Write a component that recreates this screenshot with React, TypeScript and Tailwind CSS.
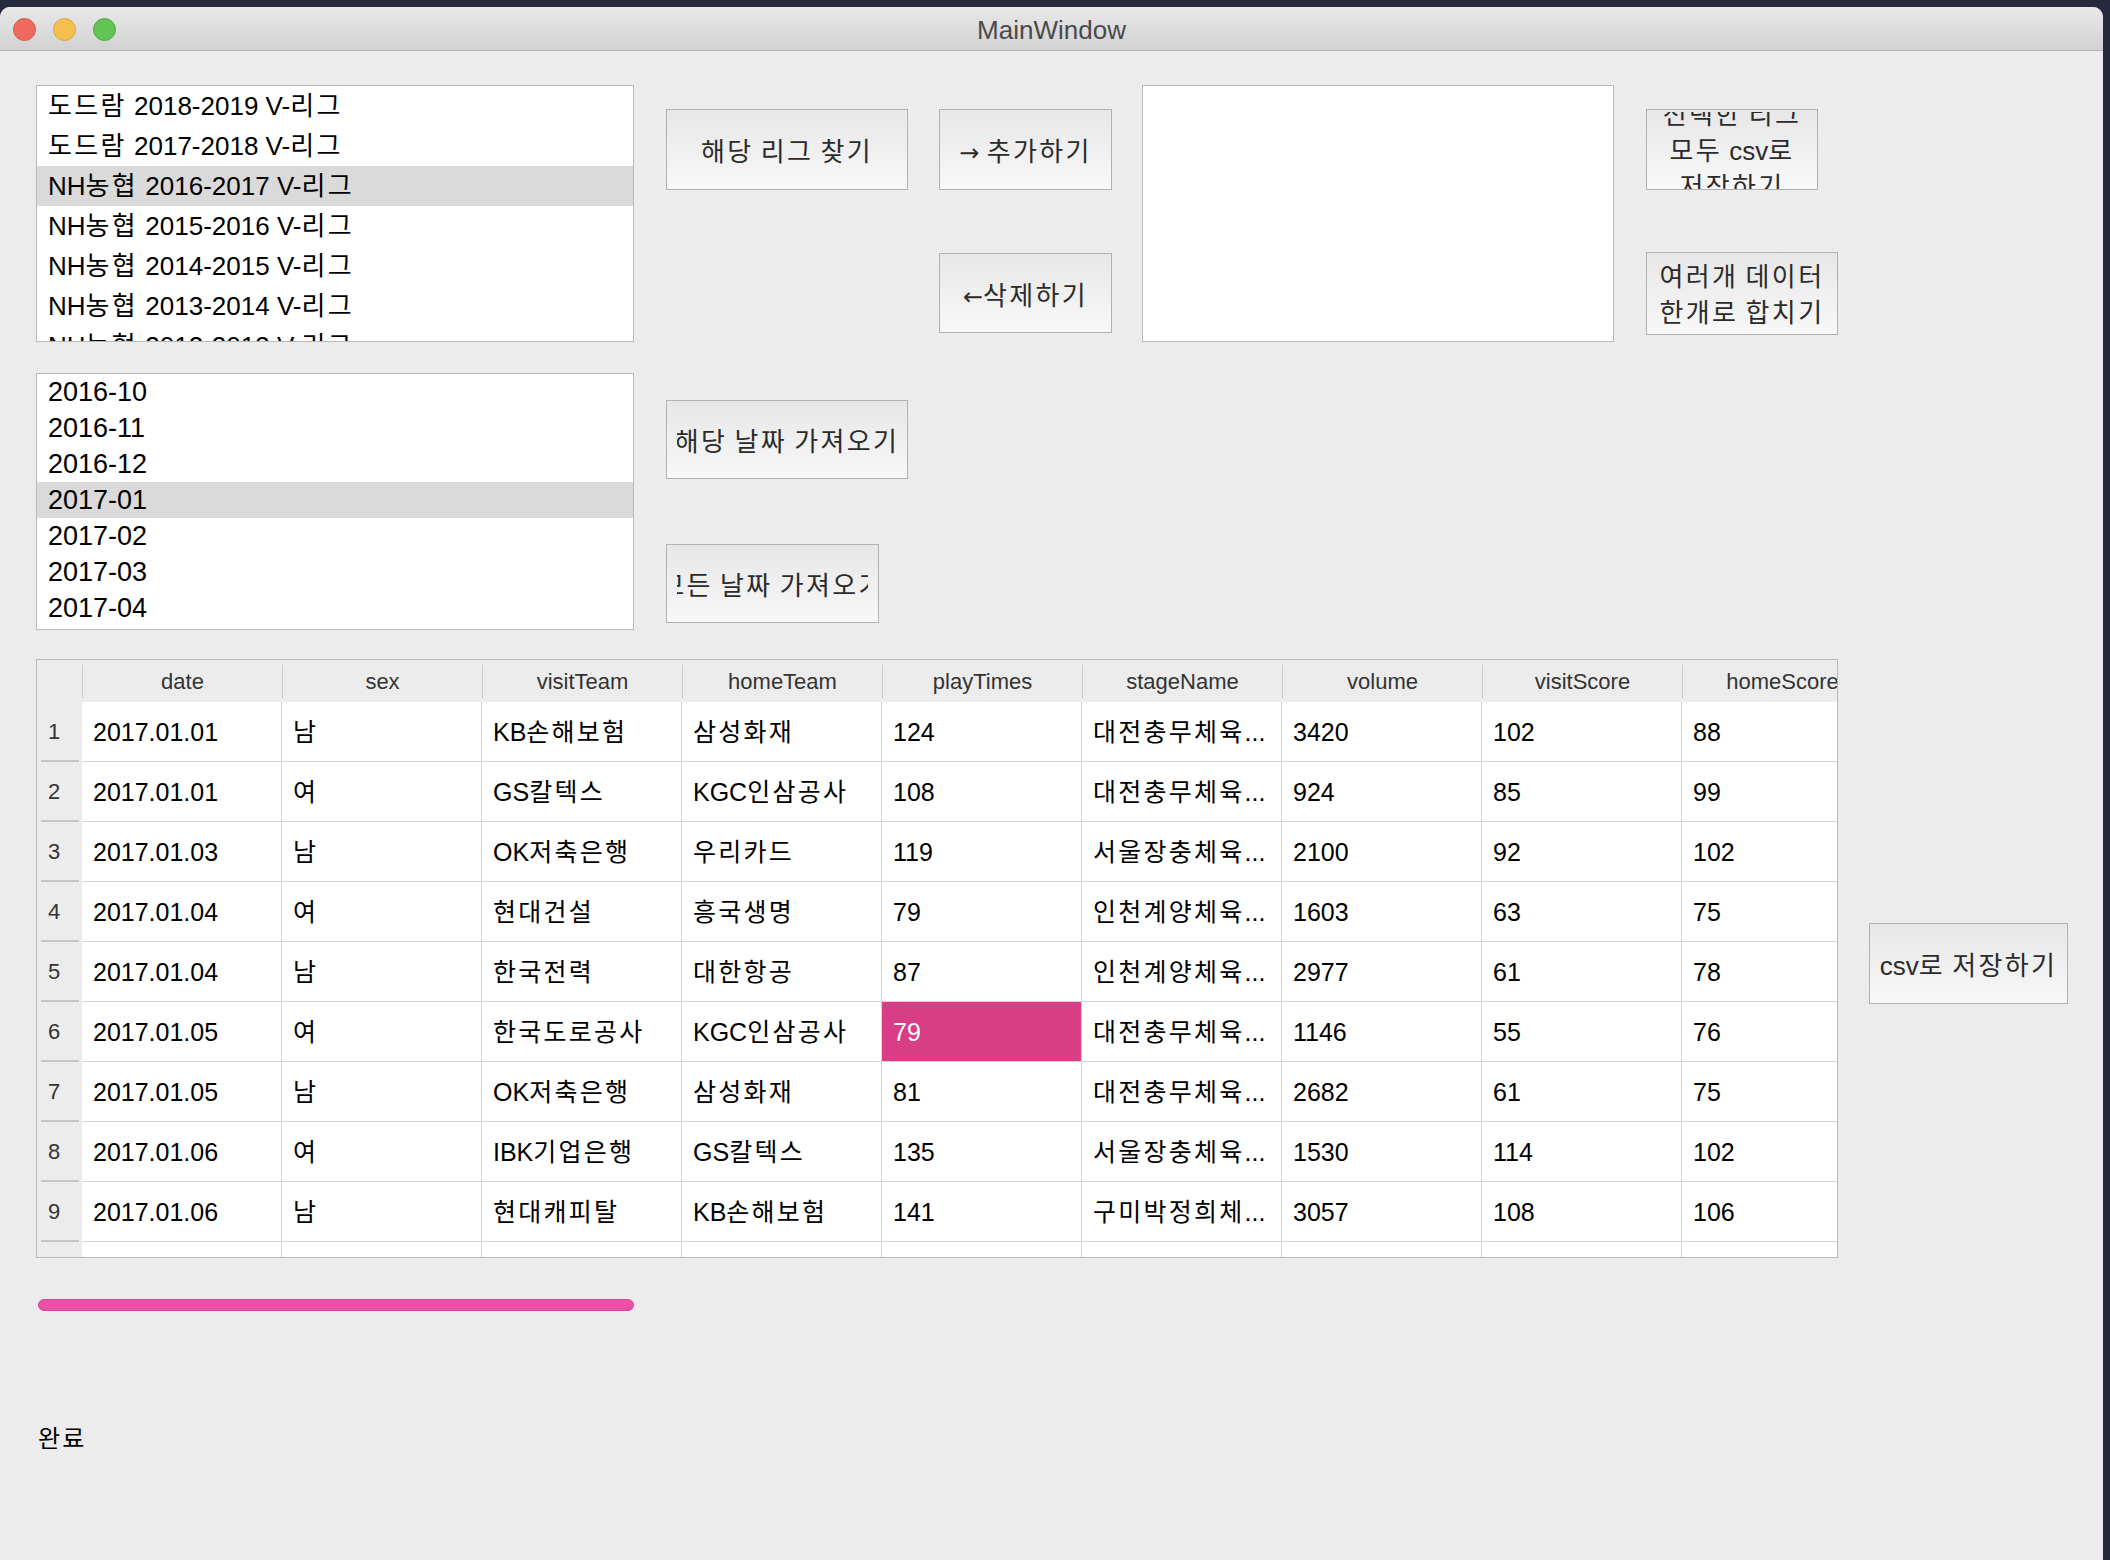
import React from 'react';

const leagues = [
  '도드람 2018-2019 V-리그',
  '도드람 2017-2018 V-리그',
  'NH농협 2016-2017 V-리그',
  'NH농협 2015-2016 V-리그',
  'NH농협 2014-2015 V-리그',
  'NH농협 2013-2014 V-리그',
  'NH농협 2012-2013 V-리그',
];

const months = ['2016-10', '2016-11', '2016-12', '2017-01', '2017-02', '2017-03', '2017-04'];

const columns = ['date', 'sex', 'visitTeam', 'homeTeam', 'playTimes', 'stageName', 'volume', 'visitScore', 'homeScore'];

const rows = [
  ['2017.01.01', '남', 'KB손해보험', '삼성화재', '124', '대전충무체육...', '3420', '102', '88'],
  ['2017.01.01', '여', 'GS칼텍스', 'KGC인삼공사', '108', '대전충무체육...', '924', '85', '99'],
  ['2017.01.03', '남', 'OK저축은행', '우리카드', '119', '서울장충체육...', '2100', '92', '102'],
  ['2017.01.04', '여', '현대건설', '흥국생명', '79', '인천계양체육...', '1603', '63', '75'],
  ['2017.01.04', '남', '한국전력', '대한항공', '87', '인천계양체육...', '2977', '61', '78'],
  ['2017.01.05', '여', '한국도로공사', 'KGC인삼공사', '79', '대전충무체육...', '1146', '55', '76'],
  ['2017.01.05', '남', 'OK저축은행', '삼성화재', '81', '대전충무체육...', '2682', '61', '75'],
  ['2017.01.06', '여', 'IBK기업은행', 'GS칼텍스', '135', '서울장충체육...', '1530', '114', '102'],
  ['2017.01.06', '남', '현대캐피탈', 'KB손해보험', '141', '구미박정희체...', '3057', '108', '106'],
  ['', '', '', '', '', '', '', '', ''],
];

// hangul glyphs come out a bit narrow here, so space them out slightly
function K({ text }: { text: string }) {
  const parts = text.split(/([\uAC00-\uD7A3]+)/);
  return (
    <span className="whitespace-pre">
      {parts.map((p, i) =>
        /[\uAC00-\uD7A3]/.test(p) ? (
          <span key={i} className="tracking-[0.09em]">
            {p}
          </span>
        ) : (
          <React.Fragment key={i}>{p}</React.Fragment>
        )
      )}
    </span>
  );
}

function Arrow({ ch }: { ch: string }) {
  return <span className="font-['DejaVu_Sans',sans-serif] text-[24px]">{ch}</span>;
}

function QtButton({ className, children, tight }: { className: string; children: React.ReactNode; tight?: boolean }) {
  return (
    <div
      className={`shrink-0 border border-[#b1b1b1] bg-linear-to-b from-[#e7e7e7] to-[#f8f8f8] text-[26px] text-[#2b2b2b] ${
        tight ? 'px-[4px] pt-[2px] pb-0' : 'px-[10px] pt-[7px] pb-[1px]'
      } ${className}`}
    >
      <div className="w-full h-full overflow-hidden flex flex-col items-center justify-center whitespace-nowrap">
        {children}
      </div>
    </div>
  );
}

export default function App() {
  return (
    <div className="w-[2110px] h-[1560px] bg-[#272a3f] overflow-hidden font-['Liberation_Sans','Noto_Sans_CJK_KR',sans-serif]">
      <div className="mt-[7px] w-[2103px] h-[1553px] rounded-t-[10px] bg-[#ececec] flex flex-col overflow-hidden">
        {/* title bar */}
        <div className="h-[44px] shrink-0 relative flex items-center justify-center pt-[3px] bg-linear-to-b from-[#e8e8e8] to-[#d2d2d2] border-b border-[#b4b4b4]">
          <div className="absolute left-[13px] top-[11px] flex gap-[17px]">
            <div className="w-[23px] h-[23px] rounded-full bg-[#ee6a5e] border border-[#d9574c]" />
            <div className="w-[23px] h-[23px] rounded-full bg-[#f5bf4f] border border-[#dca53c]" />
            <div className="w-[23px] h-[23px] rounded-full bg-[#61c454] border border-[#51aa44]" />
          </div>
          <span className="text-[26px] text-[#4a4a4a]">MainWindow</span>
        </div>

        <div className="pl-[36px] pt-[34px] flex flex-col">
          {/* top area */}
          <div className="flex items-start">
            <div className="w-[598px] flex flex-col shrink-0">
              <div className="h-[257px] border border-[#b9b9b9] bg-white overflow-hidden">
                {leagues.map((l, i) => (
                  <div
                    key={l}
                    className={`h-[40px] flex items-center pl-[11px] text-[26px] text-black whitespace-nowrap ${
                      i === 2 ? 'bg-[#dadada]' : ''
                    }`}
                  >
                    <K text={l} />
                  </div>
                ))}
              </div>
              <div className="mt-[31px] h-[257px] border border-[#b9b9b9] bg-white overflow-hidden">
                {months.map((m, i) => (
                  <div
                    key={m}
                    className={`h-[36px] flex items-center pl-[11px] text-[27px] text-black ${i === 3 ? 'bg-[#dadada]' : ''}`}
                  >
                    {m}
                  </div>
                ))}
              </div>
            </div>

            <div className="ml-[32px] w-[242px] flex flex-col items-start shrink-0">
              <QtButton className="mt-[24px] w-[242px] h-[81px]">
                <K text="해당 리그 찾기" />
              </QtButton>
              <QtButton className="mt-[210px] w-[242px] h-[79px]">
                <K text="해당 날짜 가져오기" />
              </QtButton>
              <QtButton className="mt-[65px] w-[213px] h-[79px]">
                <K text="모든 날짜 가져오기" />
              </QtButton>
            </div>

            <div className="ml-[31px] w-[173px] flex flex-col shrink-0">
              <QtButton className="mt-[24px] w-[173px] h-[81px]">
                <div>
                  <Arrow ch="→" /> <K text="추가하기" />
                </div>
              </QtButton>
              <QtButton className="mt-[63px] w-[173px] h-[80px]">
                <div>
                  <Arrow ch="←" />
                  <K text="삭제하기" />
                </div>
              </QtButton>
            </div>

            <div className="ml-[30px] w-[472px] h-[257px] shrink-0 border border-[#b9b9b9] bg-white" />

            <div className="ml-[32px] flex flex-col items-start shrink-0">
              <QtButton tight className="mt-[24px] w-[172px] h-[81px]">
                <div className="leading-[36px]">
                  <K text="선택한 리그" />
                </div>
                <div className="leading-[36px]">
                  <K text="모두 csv로" />
                </div>
                <div className="leading-[36px]">
                  <K text="저장하기" />
                </div>
              </QtButton>
              <QtButton tight className="mt-[62px] w-[192px] h-[83px]">
                <div className="leading-[36px]">
                  <K text="여러개 데이터" />
                </div>
                <div className="leading-[36px]">
                  <K text="한개로 합치기" />
                </div>
              </QtButton>
            </div>
          </div>

          {/* table area */}
          <div className="mt-[29px] flex items-start">
            <div className="w-[1802px] h-[599px] shrink-0 border border-[#b9b9b9] bg-white overflow-hidden">
              <div className="h-[42px] flex bg-[#ececec]">
                <div className="w-[45px] shrink-0" />
                {columns.map((c) => (
                  <div key={c} className="w-[200px] shrink-0 flex items-center">
                    <div className="w-px h-[33px] bg-[#c9c9c9]" />
                    <div className="flex-1 text-center text-[22px] text-[#333] whitespace-nowrap">{c}</div>
                  </div>
                ))}
              </div>
              {rows.map((r, i) => (
                <div key={i} className="h-[60px] flex">
                  <div className="w-[45px] shrink-0 bg-[#ececec] flex flex-col">
                    <div className="flex-1 flex items-center pl-[11px] text-[22px] text-[#333]">{r[0] ? i + 1 : ''}</div>
                    <div className="h-[2px] ml-[4px] mr-[3px] bg-[#c6c6c6]" />
                  </div>
                  {r.map((v, j) => (
                    <div
                      key={j}
                      className={`w-[200px] shrink-0 border-r border-b border-[#d4d4d4] flex items-center pl-[11px] pt-[2px] text-[25px] whitespace-nowrap ${
                        i === 5 && j === 4 ? 'bg-[#d93d85] text-white' : 'text-black'
                      }`}
                    >
                      <K text={v} />
                    </div>
                  ))}
                </div>
              ))}
            </div>

            <QtButton className="ml-[31px] mt-[264px] w-[199px] h-[81px]">
              <K text="csv로 저장하기" />
            </QtButton>
          </div>

          {/* progress */}
          <div className="mt-[41px] ml-[2px] w-[596px] h-[12px] rounded-full bg-[#ec50a9] border border-[#d6489a]" />

          <div className="mt-[114px] ml-[2px] text-[24px] leading-[28px] text-black">
            <K text="완료" />
          </div>
        </div>
      </div>
    </div>
  );
}
